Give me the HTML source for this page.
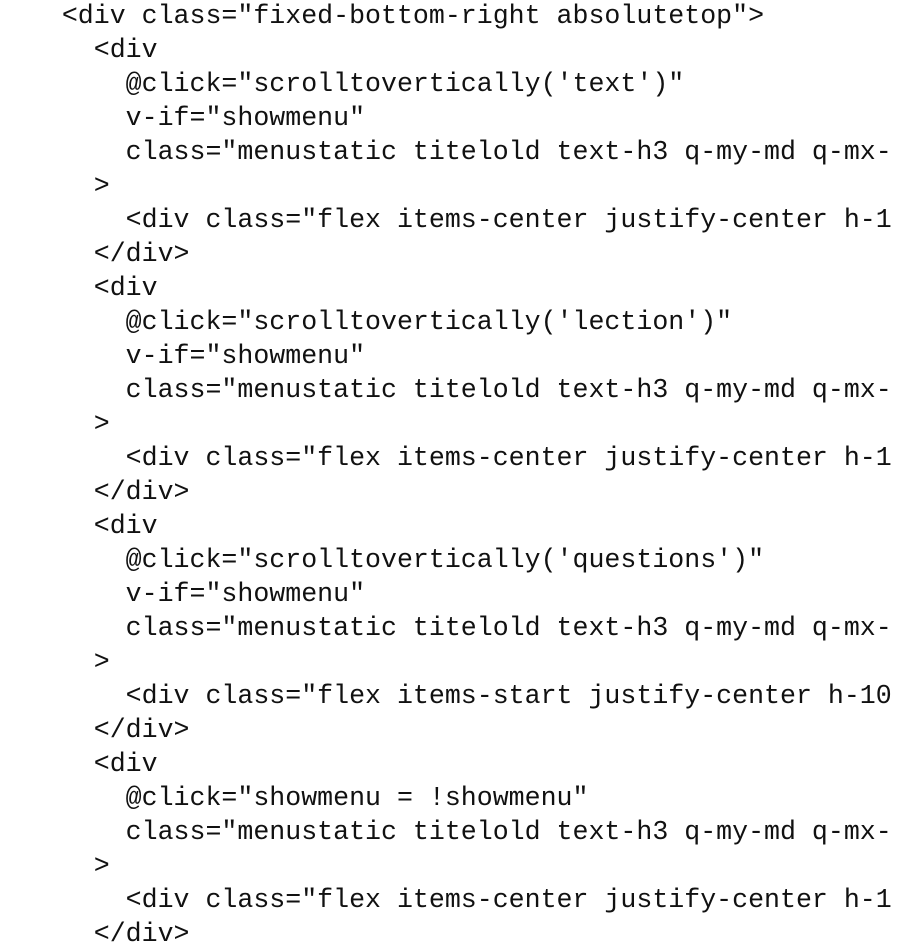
<!DOCTYPE html>
<html><head><meta charset="utf-8"><style>
html,body{margin:0;padding:0;background:#fff;width:899px;height:930px;overflow:hidden}
pre{margin:0;position:absolute;left:-2px;top:-1px;font-family:"Liberation Mono","DejaVu Sans Mono",monospace;font-size:26.6px;line-height:34px;color:#111;white-space:pre}
</style></head><body><pre>    &lt;div class="fixed-bottom-right absolutetop"&gt;
      &lt;div
        @click="scrolltovertically('text')"
        v-if="showmenu"
        class="menustatic titelold text-h3 q-my-md q-mx-
      &gt;
        &lt;div class="flex items-center justify-center h-1
      &lt;/div&gt;
      &lt;div
        @click="scrolltovertically('lection')"
        v-if="showmenu"
        class="menustatic titelold text-h3 q-my-md q-mx-
      &gt;
        &lt;div class="flex items-center justify-center h-1
      &lt;/div&gt;
      &lt;div
        @click="scrolltovertically('questions')"
        v-if="showmenu"
        class="menustatic titelold text-h3 q-my-md q-mx-
      &gt;
        &lt;div class="flex items-start justify-center h-10
      &lt;/div&gt;
      &lt;div
        @click="showmenu = !showmenu"
        class="menustatic titelold text-h3 q-my-md q-mx-
      &gt;
        &lt;div class="flex items-center justify-center h-1
      &lt;/div&gt;</pre></body></html>
